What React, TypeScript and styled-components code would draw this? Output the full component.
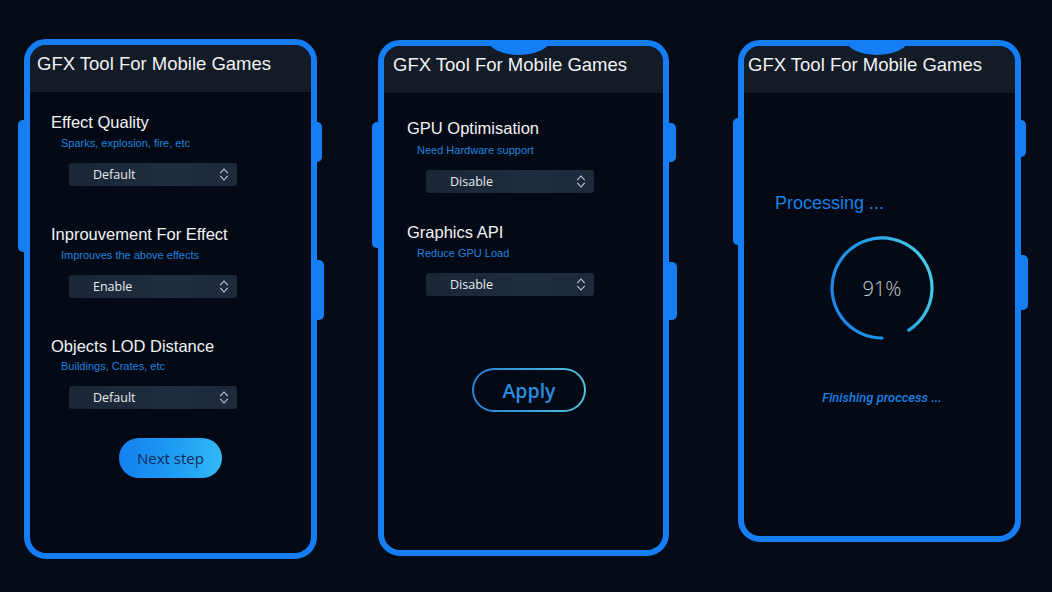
import React from 'react';
import styled, { createGlobalStyle } from 'styled-components';

const BLUE = '#157ef4';

const GlobalStyle = createGlobalStyle`
    html, body {
        margin: 0;
        padding: 0;
        background: #060c17;
    }
    body {
        width: 1052px;
        height: 592px;
        overflow: hidden;
        font-family: 'Liberation Sans', Arial, sans-serif;
    }
`;

const Page = styled.main`
    display: flex;
    align-items: flex-start;
    width: 1052px;
    height: 592px;
    padding: 39px 0 0 24px;
    box-sizing: border-box;
    background: #060c17;
`;

const Phone = styled.section<{ $w: number; $h: number; $ml?: number; $mt?: number }>`
    position: relative;
    flex: none;
    box-sizing: border-box;
    width: ${({ $w }) => $w}px;
    height: ${({ $h }) => $h}px;
    margin-left: ${({ $ml }) => $ml ?? 0}px;
    margin-top: ${({ $mt }) => $mt ?? 0}px;
    border: 6px solid ${BLUE};
    border-radius: 22px;
    background: ${BLUE};
`;

const SideKey = styled.span<{ $side: 'left' | 'right'; $top: number; $len: number; $out: number }>`
    position: absolute;
    top: ${({ $top }) => $top}px;
    height: ${({ $len }) => $len}px;
    width: ${({ $out }) => $out + 3}px;
    ${({ $side, $out }) => `${$side}: -${6 + $out}px;`}
    background: ${BLUE};
    border-radius: ${({ $side }) => ($side === 'left' ? '5px 0 0 5px' : '0 5px 5px 0')};
`;

const Notch = styled.span<{ $left: number }>`
    position: absolute;
    z-index: 2;
    top: -6px;
    left: ${({ $left }) => $left}px;
    width: 62px;
    height: 15px;
    background: ${BLUE};
    border-radius: 0 0 31px 31px / 0 0 15px 15px;
`;

const Screen = styled.div`
    display: flex;
    flex-direction: column;
    height: 100%;
    border-radius: 16px;
    overflow: hidden;
    background: #040a15;
`;

const Header = styled.header<{ $pad: number }>`
    flex: none;
    height: 47px;
    box-sizing: border-box;
    padding: 8px 0 0 ${({ $pad }) => $pad}px;
    background: #131b27;
`;

const Title = styled.h1`
    margin: 0;
    font-size: 18.5px;
    line-height: 22px;
    font-weight: 400;
    color: #f1f2f4;
    white-space: nowrap;
`;

const Body = styled.div<{ $top: number; $left: number }>`
    display: flex;
    flex-direction: column;
    align-items: flex-start;
    padding: ${({ $top }) => $top}px 0 0 ${({ $left }) => $left}px;
`;

const Setting = styled.div<{ $mt: number }>`
    display: flex;
    flex-direction: column;
    align-items: flex-start;
    margin-top: ${({ $mt }) => $mt}px;
`;

const Label = styled.div`
    font-size: 16.5px;
    line-height: 20px;
    color: #f2f3f5;
    white-space: nowrap;
`;

const Hint = styled.div<{ $mt: number }>`
    margin-top: ${({ $mt }) => $mt}px;
    padding-left: 10px;
    font-size: 11px;
    line-height: 14px;
    color: #1f82dc;
    white-space: nowrap;
`;

const SelectBox = styled.div<{ $indent: number }>`
    display: flex;
    align-items: center;
    justify-content: space-between;
    box-sizing: border-box;
    width: 168px;
    height: 23px;
    margin: 13px 0 0 ${({ $indent }) => $indent}px;
    padding: 0 8px 0 24px;
    border-radius: 3px;
    background: linear-gradient(90deg, #1a2636 0%, #1f2d40 60%, #1d2a3c 100%);
    font-family: 'Open Sans', 'Noto Sans', sans-serif;
    font-size: 12.5px;
    color: #e8ebef;
`;

const ButtonRow = styled.div<{ $mt: number; $indent: number }>`
    display: flex;
    margin-top: ${({ $mt }) => $mt}px;
    padding-left: ${({ $indent }) => $indent}px;
`;

const NextButton = styled.button`
    width: 103px;
    height: 40px;
    border: none;
    border-radius: 20px;
    background: linear-gradient(90deg, #1481f1 0%, #1f9cf3 55%, #33b9f5 100%);
    font-family: 'Open Sans', 'Noto Sans', sans-serif;
    font-size: 15px;
    color: #0d2b57;
    cursor: pointer;
`;

const ApplyButton = styled.button`
    width: 114px;
    height: 44px;
    border: 2px solid transparent;
    border-radius: 22px;
    background:
        linear-gradient(#040a15, #040a15) padding-box,
        linear-gradient(90deg, #2780d8 0%, #3aa4dc 55%, #52c6d8 100%) border-box;
    font-family: 'Open Sans', 'Noto Sans', sans-serif;
    font-size: 19.5px;
    font-weight: 600;
    color: #2b8ddf;
    cursor: pointer;
`;

const Processing = styled.div`
    font-size: 18px;
    line-height: 22px;
    color: #1a7fe2;
    white-space: nowrap;
`;

const ProgressColumn = styled.div`
    display: flex;
    flex-direction: column;
    align-items: center;
    width: 104px;
    margin: 22px 0 0 55px;
`;

const Ring = styled.div`
    position: relative;
    width: 104px;
    height: 104px;
`;

const Percent = styled.span`
    position: absolute;
    inset: 0;
    display: flex;
    align-items: center;
    justify-content: center;
    font-family: 'Open Sans', 'Noto Sans', sans-serif;
    font-size: 20px;
    font-weight: 300;
    color: #c9cdd2;
`;

const Finishing = styled.div`
    margin-top: 50px;
    font-family: Roboto, 'Noto Sans', sans-serif;
    font-style: italic;
    font-weight: 500;
    font-size: 13px;
    line-height: 16px;
    color: #1b7fe0;
    white-space: nowrap;
`;

function UpDown() {
    return (
        <svg width="10" height="15" viewBox="0 0 10 15" fill="none">
            <path d="M1.3 6.2 L5 2 L8.7 6.2" stroke="#c5ccd5" strokeWidth="1.1" />
            <path d="M1.3 8.8 L5 13 L8.7 8.8" stroke="#c5ccd5" strokeWidth="1.1" />
        </svg>
    );
}

type SettingProps = {
    label: string;
    hint: string;
    value: string;
    mt: number;
    hintMt: number;
    indent: number;
};

function SettingBlock({ label, hint, value, mt, hintMt, indent }: SettingProps) {
    return (
        <Setting $mt={mt}>
            <Label>{label}</Label>
            <Hint $mt={hintMt}>{hint}</Hint>
            <SelectBox $indent={indent}>
                <span>{value}</span>
                <UpDown />
            </SelectBox>
        </Setting>
    );
}

function ProgressRing({ value }: { value: number }) {
    // arc starts at 6 o'clock and runs clockwise
    const start = Math.PI / 2;
    const end = start + (value / 100) * Math.PI * 2;
    const r = 50;
    const x = 52 + r * Math.cos(end);
    const y = 52 + r * Math.sin(end);
    return (
        <Ring>
            <svg width="104" height="104" viewBox="0 0 104 104">
                <defs>
                    <linearGradient id="ring" gradientUnits="userSpaceOnUse" x1="0" y1="80" x2="104" y2="40">
                        <stop offset="0" stopColor="#1a84ea" />
                        <stop offset="0.5" stopColor="#2299ea" />
                        <stop offset="1" stopColor="#42d0e4" />
                    </linearGradient>
                </defs>
                <path
                    d={`M52 102 A${r} ${r} 0 1 1 ${x.toFixed(2)} ${y.toFixed(2)}`}
                    fill="none"
                    stroke="url(#ring)"
                    strokeWidth="3.2"
                    strokeLinecap="round"
                />
            </svg>
            <Percent>{value}%</Percent>
        </Ring>
    );
}

const TITLE = 'GFX Tool For Mobile Games';

export default function App() {
    return (
        <>
            <GlobalStyle />
            <Page>
                <Phone $w={293} $h={520}>
                    <SideKey $side="left" $top={75} $len={132} $out={6} />
                    <SideKey $side="right" $top={77} $len={40} $out={5} />
                    <SideKey $side="right" $top={215} $len={60} $out={7} />
                    <Screen>
                        <Header $pad={7}>
                            <Title>{TITLE}</Title>
                        </Header>
                        <Body $top={20} $left={21}>
                            <SettingBlock
                                mt={0}
                                hintMt={4}
                                indent={18}
                                label="Effect Quality"
                                hint="Sparks, explosion, fire, etc"
                                value="Default"
                            />
                            <SettingBlock
                                mt={38}
                                hintMt={4}
                                indent={18}
                                label="Inprouvement For Effect"
                                hint="Improuves the above effects"
                                value="Enable"
                            />
                            <SettingBlock
                                mt={38}
                                hintMt={3}
                                indent={18}
                                label="Objects LOD Distance"
                                hint="Buildings, Crates, etc"
                                value="Default"
                            />
                            <ButtonRow $mt={29} $indent={68}>
                                <NextButton>Next step</NextButton>
                            </ButtonRow>
                        </Body>
                    </Screen>
                </Phone>

                <Phone $w={291} $h={516} $ml={61} $mt={1}>
                    <SideKey $side="left" $top={76} $len={126} $out={6} />
                    <SideKey $side="right" $top={77} $len={39} $out={7} />
                    <SideKey $side="right" $top={216} $len={58} $out={8} />
                    <Notch $left={104} />
                    <Screen>
                        <Header $pad={9}>
                            <Title>{TITLE}</Title>
                        </Header>
                        <Body $top={25} $left={23}>
                            <SettingBlock
                                mt={0}
                                hintMt={5}
                                indent={19}
                                label="GPU Optimisation"
                                hint="Need Hardware support"
                                value="Disable"
                            />
                            <SettingBlock
                                mt={29}
                                hintMt={4}
                                indent={19}
                                label="Graphics API"
                                hint="Reduce GPU Load"
                                value="Disable"
                            />
                            <ButtonRow $mt={72} $indent={65}>
                                <ApplyButton>Apply</ApplyButton>
                            </ButtonRow>
                        </Body>
                    </Screen>
                </Phone>

                <Phone $w={283} $h={502} $ml={69} $mt={1}>
                    <SideKey $side="left" $top={72} $len={127} $out={5} />
                    <SideKey $side="right" $top={74} $len={37} $out={5} />
                    <SideKey $side="right" $top={209} $len={55} $out={7} />
                    <Notch $left={102} />
                    <Screen>
                        <Header $pad={4}>
                            <Title>{TITLE}</Title>
                        </Header>
                        <Body $top={99} $left={31}>
                            <Processing>Processing ...</Processing>
                            <ProgressColumn>
                                <ProgressRing value={91} />
                                <Finishing>Finishing proccess ...</Finishing>
                            </ProgressColumn>
                        </Body>
                    </Screen>
                </Phone>
            </Page>
        </>
    );
}
